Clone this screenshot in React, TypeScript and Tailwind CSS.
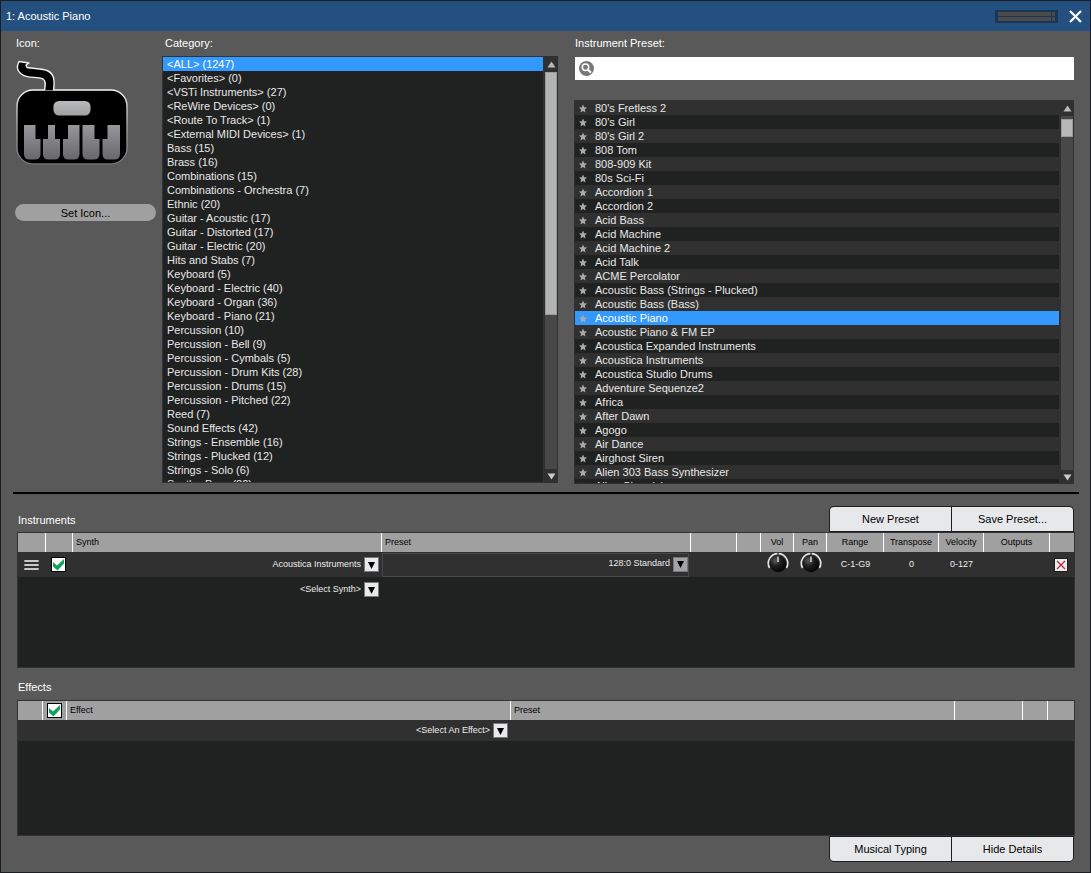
import { useState } from 'react';
import type { ReactNode } from 'react';

const categories = [
    '<ALL> (1247)',
    '<Favorites> (0)',
    '<VSTi Instruments> (27)',
    '<ReWire Devices> (0)',
    '<Route To Track> (1)',
    '<External MIDI Devices> (1)',
    'Bass (15)',
    'Brass (16)',
    'Combinations (15)',
    'Combinations - Orchestra (7)',
    'Ethnic (20)',
    'Guitar - Acoustic (17)',
    'Guitar - Distorted (17)',
    'Guitar - Electric (20)',
    'Hits and Stabs (7)',
    'Keyboard (5)',
    'Keyboard - Electric (40)',
    'Keyboard - Organ (36)',
    'Keyboard - Piano (21)',
    'Percussion (10)',
    'Percussion - Bell (9)',
    'Percussion - Cymbals (5)',
    'Percussion - Drum Kits (28)',
    'Percussion - Drums (15)',
    'Percussion - Pitched (22)',
    'Reed (7)',
    'Sound Effects (42)',
    'Strings - Ensemble (16)',
    'Strings - Plucked (12)',
    'Strings - Solo (6)',
    'Synth - Bass (22)',
];

const presets = [
    "80's Fretless 2",
    "80's Girl",
    "80's Girl 2",
    '808 Tom',
    '808-909 Kit',
    '80s Sci-Fi',
    'Accordion 1',
    'Accordion 2',
    'Acid Bass',
    'Acid Machine',
    'Acid Machine 2',
    'Acid Talk',
    'ACME Percolator',
    'Acoustic Bass (Strings - Plucked)',
    'Acoustic Bass (Bass)',
    'Acoustic Piano',
    'Acoustic Piano & FM EP',
    'Acoustica Expanded Instruments',
    'Acoustica Instruments',
    'Acoustica Studio Drums',
    'Adventure Sequenze2',
    'Africa',
    'After Dawn',
    'Agogo',
    'Air Dance',
    'Airghost Siren',
    'Alien 303 Bass Synthesizer',
    'Alien Chronicles',
];

function KeyboardIcon() {
    return (
        <svg className="block h-[108px] w-[114px]" viewBox="0 0 114 108" aria-hidden="true">
            <defs>
                <linearGradient id="key" x1="0" y1="0" x2="0" y2="1">
                    <stop offset="0" stopColor="#97979a" />
                    <stop offset="1" stopColor="#68686b" />
                </linearGradient>
                <linearGradient id="display" x1="0" y1="0" x2="0" y2="1">
                    <stop offset="0" stopColor="#b9babc" />
                    <stop offset="1" stopColor="#a0a1a3" />
                </linearGradient>
                <linearGradient id="edge" x1="0" y1="0" x2="0" y2="1">
                    <stop offset="0" stopColor="#f4f4f4" />
                    <stop offset="0.5" stopColor="#a2a2a2" />
                    <stop offset="1" stopColor="#707070" />
                </linearGradient>
            </defs>
            <rect x="2" y="31" width="110" height="74" rx="16" fill="#000" stroke="url(#edge)" strokeWidth="1.4" />
            <path
                d="M4 2.5 L14 4 L11 6 L12 8.5 C19 10 27 9 33 12 C39 15 40 21 38.5 32 H29.5 C30 27 31.5 22 28 20 C22 17 13 20 7 15.5 C2 12 1.5 7 4 2.5 Z"
                fill="#000"
                stroke="#f1f1f1"
                strokeWidth="1.4"
                strokeLinejoin="round"
            />
            <path d="M29 31.7 H39 V36 H29 Z" fill="#000" />
            <rect x="38.5" y="42" width="37" height="14.5" rx="5.5" fill="url(#display)" />
            <g fill="url(#key)">
                <path d="M9 66 H20.5 V80 H25.5 V95 Q25.5 100.5 20 100.5 H14.5 Q9 100.5 9 95 Z" />
                <path d="M33 66 H40 V80 H45 V95 Q45 100.5 39.5 100.5 H33.5 Q28 100.5 28 95 V80 H33 Z" />
                <path d="M53 66 H64.500 V95 Q64.500 100.5 59 100.5 H53.5 Q48 100.5 48 95 V80 H53 Z" />
                <path d="M67.5 66 H79.5 V80 H84.5 V95 Q84.5 100.5 79 100.5 H73 Q67.5 100.5 67.5 95 Z" />
                <path d="M92.5 66 H105 V95 Q105 100.5 99.5 100.5 H93 Q87.5 100.5 87.5 95 V80 H92.5 Z" />
            </g>
        </svg>
    );
}

function Star() {
    return (
        <svg className="h-[9px] w-[8px] shrink-0" viewBox="0 0 8 8" aria-hidden="true">
            <path d="M4 0 L5.2 2.7 L8 3 L5.9 5 L6.5 8 L4 6.4 L1.5 8 L2.1 5 L0 3 L2.8 2.7 Z" fill="#a9a9a9" />
        </svg>
    );
}

function Knob({ label }: { label: string }) {
    return (
        <button type="button" aria-label={label} className="mx-auto block h-[22px] w-[22px]">
            <svg className="block" width="22" height="22" viewBox="0 0 22 22" aria-hidden="true">
                <defs>
                    <radialGradient id="knob" cx="0.35" cy="0.3" r="0.8">
                        <stop offset="0" stopColor="#5a5a5a" />
                        <stop offset="0.45" stopColor="#1c1c1c" />
                        <stop offset="1" stopColor="#000" />
                    </radialGradient>
                </defs>
                <path d="M2.500 16 A9.700 9.700 0 1 1 19.500 16" fill="none" stroke="#e4e4e4" strokeWidth="1.6" />
                <circle cx="11" cy="12" r="8.2" fill="url(#knob)" />
                <path d="M11 0 V4" stroke="#222" strokeWidth="1.2" />
                <path d="M11 4.5 V10" stroke="#fff" strokeWidth="1.2" />
            </svg>
        </button>
    );
}

function CheckBox({ label }: { label: string }) {
    const [checked, setChecked] = useState(true);
    return (
        <label className="relative mx-auto block h-[15px] w-[15px]">
            <input
                type="checkbox"
                aria-label={label}
                checked={checked}
                onChange={() => setChecked(!checked)}
                className="block h-[15px] w-[15px] appearance-none border border-black bg-white"
            />
            {checked && (
                <svg className="pointer-events-none absolute inset-0" width="15" height="15" viewBox="0 0 15 15" aria-hidden="true">
                    <path d="M2 5 L6 8.5 L13 2 V6.5 L6.500 13.5 L2 9.5 Z" fill="#12a25c" />
                </svg>
            )}
        </label>
    );
}

function DropDown({ label, value, disabled }: { label: string; value: string; disabled?: boolean }) {
    return (
        <div className="relative flex h-[19px] items-start justify-end">
            <select
                aria-label={label}
                className="h-[17px] appearance-none bg-transparent pr-[18px] text-right text-[9px] text-[#ececec] outline-none"
            >
                <option>{value}</option>
            </select>
            <span
                className={`pointer-events-none absolute right-0 top-[2px] flex h-[15px] w-[15px] items-center justify-center border border-[#77777a] ${disabled ? 'bg-[#a3a3a5]' : 'bg-[#e9e9eb]'}`}
            >
                <svg width="9" height="8" viewBox="0 0 9 8" aria-hidden="true">
                    <path d="M1 1 H8 L4.5 8 Z" fill="#000" />
                </svg>
            </span>
        </div>
    );
}

function ScrollBar({ children }: { children: ReactNode }) {
    return (
        <div className="flex w-[14px] shrink-0 flex-col items-center bg-[#303030]">
            <button type="button" aria-label="Scroll up" className="flex h-[16px] w-full items-center justify-center">
                <svg width="9" height="7" viewBox="0 0 9 7" aria-hidden="true">
                    <path d="M4.5 0.5 L8.5 6.5 H0.5 Z" fill="#b9b9b9" />
                </svg>
            </button>
            <div className="w-[12px] flex-1 bg-[#484848]">{children}</div>
            <button type="button" aria-label="Scroll down" className="flex h-[14px] w-full items-center justify-center">
                <svg width="9" height="7" viewBox="0 0 9 7" aria-hidden="true">
                    <path d="M0.5 0.5 H8.5 L4.5 6.5 Z" fill="#c9c9c9" />
                </svg>
            </button>
        </div>
    );
}

const th = 'border-r border-white px-[3px] pb-[2px] text-left font-normal';
const thCenter = 'border-r border-white pb-[2px] text-center font-normal';

export default function App() {
    const [category, setCategory] = useState(0);
    const [preset, setPreset] = useState(15);

    return (
        <div className="min-h-screen border border-[#1c1d1f] bg-[#595959] font-['Liberation_Sans',Arial,sans-serif] text-[11px] leading-[14px] text-white">
            {/* Title bar */}
            <header className="flex h-[30px] items-center bg-[#245080] pl-[5px] pr-[7px]">
                <h1 className="flex-1">1: Acoustic Piano</h1>
                <div className="mr-[10px] flex h-[13px] w-[63px] flex-col justify-center gap-px bg-[#1b3654] px-[3px]">
                    <div className="flex h-[4px] gap-px">
                        <div className="flex-1 bg-[#4b4b4b]"></div>
                        <div className="w-[3px] bg-[#4b4b4b]"></div>
                    </div>
                    <div className="flex h-[4px] gap-px">
                        <div className="flex-1 bg-[#4b4b4b]"></div>
                        <div className="w-[3px] bg-[#4b4b4b]"></div>
                    </div>
                </div>
                <button type="button" aria-label="Close">
                    <svg className="block" width="15" height="15" viewBox="0 0 15 15" aria-hidden="true">
                        <path d="M2 2 L13 13 M13 2 L2 13" stroke="#fff" strokeWidth="2.2" />
                    </svg>
                </button>
            </header>

            {/* Browser */}
            <section className="flex pr-[15px]">
                <div className="w-[161px] shrink-0 pl-[14px]">
                    <h2 className="flex h-[28px] items-center pb-[4px] pl-px">Icon:</h2>
                    <KeyboardIcon />
                    <button type="button" className="mt-[37px] block h-[17px] w-[141px] rounded-full bg-[#a0a0a0] text-black">
                        Set Icon...
                    </button>
                </div>

                <div className="w-[396px] shrink-0">
                    <h2 className="flex h-[25px] items-center pb-px pl-[3px]">Category:</h2>
                    <div className="flex h-[427px]">
                        <ul role="listbox" aria-label="Category" className="flex-1 overflow-hidden border border-[#333333] bg-[#202221]">
                            {categories.map((name, i) => (
                                <li
                                    key={name}
                                    role="option"
                                    aria-selected={i === category}
                                    onClick={() => setCategory(i)}
                                    className={`h-[14px] whitespace-nowrap pl-[4px] ${i === category ? 'bg-[#3399ff] text-white' : 'text-[#e8e8e8]'}`}
                                >
                                    {name}
                                </li>
                            ))}
                        </ul>
                        <ScrollBar>
                            <div className="h-[243px] border border-[#9b9b9b] bg-[#b3b5b4]"></div>
                        </ScrollBar>
                    </div>
                </div>

                <div className="ml-[16px] min-w-0 flex-1">
                    <label htmlFor="preset-search" className="flex h-[26px] items-center pb-[2px] pl-px">
                        Instrument Preset:
                    </label>
                    <div className="ml-px mr-px flex h-[23px] items-center bg-white px-[4px]">
                        <svg width="15" height="15" viewBox="0 0 15 15" aria-hidden="true">
                            <circle cx="7.5" cy="7.5" r="7.5" fill="#787878" />
                            <circle cx="6.5" cy="6.2" r="3.2" fill="none" stroke="#fff" strokeWidth="1.5" />
                            <path d="M8.8 8.5 L12 11.7" stroke="#fff" strokeWidth="2" />
                        </svg>
                        <input id="preset-search" type="text" className="ml-[4px] min-w-0 flex-1 text-black outline-none" />
                    </div>
                    <div className="mr-px mt-[20px] flex h-[384px]">
                        <ul role="listbox" aria-label="Instrument Preset" className="flex-1 overflow-hidden border border-[#303030] bg-[#202221]">
                            {presets.map((name, i) => (
                                <li
                                    key={name}
                                    role="option"
                                    aria-selected={i === preset}
                                    onClick={() => setPreset(i)}
                                    className={`flex h-[14px] items-center gap-[8px] whitespace-nowrap pl-[4px] ${i === preset ? 'bg-[#3399ff] text-white' : 'text-[#e8e8e8] odd:bg-[#303030]'}`}
                                >
                                    <Star />
                                    {name}
                                </li>
                            ))}
                        </ul>
                        <ScrollBar>
                            <div className="border-t-[3px] border-[#484848]">
                                <div className="h-[18px] border border-[#9b9b9b] bg-[#b9b9b9]"></div>
                            </div>
                        </ScrollBar>
                    </div>
                </div>
            </section>

            <hr className="ml-[12px] mr-[11px] mt-[8px] border-t-2 border-black" />

            {/* Instruments */}
            <section className="px-[16px] pr-[15px]">
                <div className="flex justify-between pt-[12px]">
                    <h2 className="flex h-[26px] items-center pl-px pt-[2px]">Instruments</h2>
                    <div className="mr-px flex w-[245px] gap-px rounded-t-[5px] border border-b-0 border-[#1e1e1e] bg-[#1e1e1e] pb-px text-black">
                        <button type="button" className="flex-1 rounded-tl-[4px] bg-[#e6e8ea]">New Preset</button>
                        <button type="button" className="flex-1 rounded-tr-[4px] bg-[#e6e8ea]">Save Preset...</button>
                    </div>
                </div>
                <div className="min-h-[136px] border border-[#333333] bg-[#202221]">
                    <table className="w-full table-fixed border-separate border-spacing-0 text-[9px]">
                        <colgroup>
                            <col className="w-[28px]" />
                            <col className="w-[27px]" />
                            <col />
                            <col />
                            <col className="w-[46px]" />
                            <col className="w-[24px]" />
                            <col className="w-[33px]" />
                            <col className="w-[33px]" />
                            <col className="w-[57px]" />
                            <col className="w-[55px]" />
                            <col className="w-[45px]" />
                            <col className="w-[66px]" />
                            <col className="w-[24px]" />
                        </colgroup>
                        <thead>
                            <tr className="h-[19px] bg-[#a0a0a0] text-black">
                                <th className={th}></th>
                                <th className={th}></th>
                                <th className={th}>Synth</th>
                                <th className={th}>Preset</th>
                                <th className={th}></th>
                                <th className={th}></th>
                                <th className={thCenter}>Vol</th>
                                <th className={thCenter}>Pan</th>
                                <th className={thCenter}>Range</th>
                                <th className={thCenter}>Transpose</th>
                                <th className={thCenter}>Velocity</th>
                                <th className={thCenter}>Outputs</th>
                                <th></th>
                            </tr>
                        </thead>
                        <tbody className="text-[#ececec]">
                            <tr className="h-[25px] bg-[#303030] text-center">
                                <td className="pr-[2px]">
                                    <svg className="mx-auto block" width="15" height="12" viewBox="0 0 15 12" aria-hidden="true">
                                        <path d="M1 2 H14 M1 6 H14 M1 10 H14" stroke="#c9c9c9" strokeWidth="1.8" strokeLinecap="round" />
                                    </svg>
                                </td>
                                <td className="pr-[2px]"><CheckBox label="Enable Acoustica Instruments" /></td>
                                <td className="pr-[3px]"><DropDown label="Synth" value="Acoustica Instruments" /></td>
                                <td className="pr-[2px]">
                                    <div className="h-[24px] border border-[#484848] pt-px">
                                        <DropDown label="Synth preset" value="128:0 Standard" disabled />
                                    </div>
                                </td>
                                <td></td>
                                <td></td>
                                <td className="pb-[3px]"><Knob label="Vol" /></td>
                                <td className="pb-[3px]"><Knob label="Pan" /></td>
                                <td className="pb-[2px]">C-1-G9</td>
                                <td className="pb-[2px]">0</td>
                                <td className="pb-[2px]">0-127</td>
                                <td></td>
                                <td className="pr-[2px]">
                                    <button type="button" aria-label="Remove instrument" className="mx-auto block h-[14px] w-[14px] border border-[#1c1c1c] bg-[#ececee]">
                                        <svg className="block" width="12" height="12" viewBox="0 0 12 12" aria-hidden="true">
                                            <path d="M2 2 L10 10 M10 2 L2 10" stroke="#b8303c" strokeWidth="1.3" />
                                        </svg>
                                    </button>
                                </td>
                            </tr>
                            <tr className="h-[25px]">
                                <td></td>
                                <td></td>
                                <td className="pr-[3px]"><DropDown label="Add synth" value="<Select Synth>" /></td>
                                <td colSpan={10}></td>
                            </tr>
                        </tbody>
                    </table>
                </div>
            </section>

            {/* Effects */}
            <section className="pb-[9px] pl-[16px] pr-[15px]">
                <h2 className="flex h-[32px] items-center pl-px pt-[6px]">Effects</h2>
                <div className="min-h-[136px] border border-[#333333] bg-[#202221]">
                    <table className="w-full table-fixed border-separate border-spacing-0 text-[9px]">
                        <colgroup>
                            <col className="w-[25px]" />
                            <col className="w-[24px]" />
                            <col />
                            <col />
                            <col className="w-[68px]" />
                            <col className="w-[25px]" />
                            <col className="w-[26px]" />
                        </colgroup>
                        <thead>
                            <tr className="h-[19px] bg-[#a0a0a0] text-black">
                                <th className={th}></th>
                                <th className="border-r border-white pr-px"><CheckBox label="Enable effects" /></th>
                                <th className={th}>Effect</th>
                                <th className={th}>Preset</th>
                                <th className={th}></th>
                                <th className={th}></th>
                                <th></th>
                            </tr>
                        </thead>
                        <tbody>
                            <tr className="h-[21px] bg-[#303030]">
                                <td></td>
                                <td></td>
                                <td className="pr-[3px]"><DropDown label="Add effect" value="<Select An Effect>" /></td>
                                <td colSpan={4}></td>
                            </tr>
                        </tbody>
                    </table>
                </div>
                <div className="ml-auto mr-px flex h-[26px] w-[245px] gap-px rounded-b-[5px] border border-[#1e1e1e] bg-[#1e1e1e] text-black">
                    <button type="button" className="flex-1 rounded-bl-[4px] bg-[#e6e8ea]">Musical Typing</button>
                    <button type="button" className="flex-1 rounded-br-[4px] bg-[#e6e8ea]">Hide Details</button>
                </div>
            </section>
        </div>
    );
}
